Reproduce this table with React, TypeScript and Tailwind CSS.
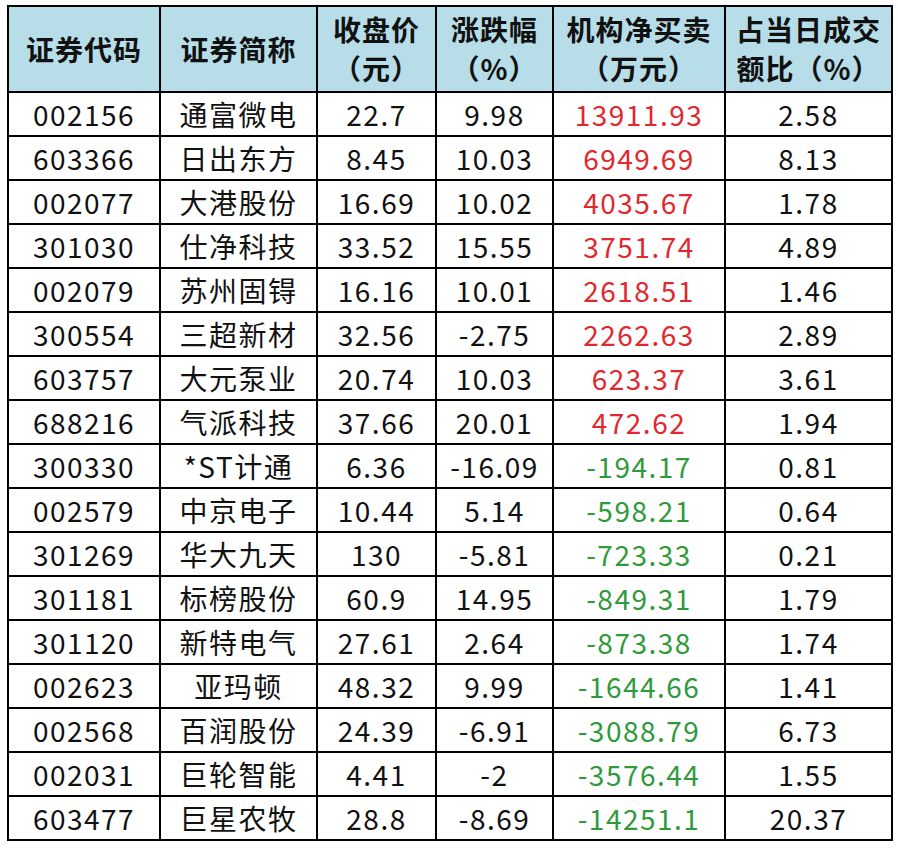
import React from "react";

interface Row {
  code: string;
  name: string;
  close: string;
  change: string;
  net: string;
  ratio: string;
}

const rows: Row[] = [
  { code: "002156", name: "通富微电", close: "22.7", change: "9.98", net: "13911.93", ratio: "2.58" },
  { code: "603366", name: "日出东方", close: "8.45", change: "10.03", net: "6949.69", ratio: "8.13" },
  { code: "002077", name: "大港股份", close: "16.69", change: "10.02", net: "4035.67", ratio: "1.78" },
  { code: "301030", name: "仕净科技", close: "33.52", change: "15.55", net: "3751.74", ratio: "4.89" },
  { code: "002079", name: "苏州固锝", close: "16.16", change: "10.01", net: "2618.51", ratio: "1.46" },
  { code: "300554", name: "三超新材", close: "32.56", change: "-2.75", net: "2262.63", ratio: "2.89" },
  { code: "603757", name: "大元泵业", close: "20.74", change: "10.03", net: "623.37", ratio: "3.61" },
  { code: "688216", name: "气派科技", close: "37.66", change: "20.01", net: "472.62", ratio: "1.94" },
  { code: "300330", name: "*ST计通", close: "6.36", change: "-16.09", net: "-194.17", ratio: "0.81" },
  { code: "002579", name: "中京电子", close: "10.44", change: "5.14", net: "-598.21", ratio: "0.64" },
  { code: "301269", name: "华大九天", close: "130", change: "-5.81", net: "-723.33", ratio: "0.21" },
  { code: "301181", name: "标榜股份", close: "60.9", change: "14.95", net: "-849.31", ratio: "1.79" },
  { code: "301120", name: "新特电气", close: "27.61", change: "2.64", net: "-873.38", ratio: "1.74" },
  { code: "002623", name: "亚玛顿", close: "48.32", change: "9.99", net: "-1644.66", ratio: "1.41" },
  { code: "002568", name: "百润股份", close: "24.39", change: "-6.91", net: "-3088.79", ratio: "6.73" },
  { code: "002031", name: "巨轮智能", close: "4.41", change: "-2", net: "-3576.44", ratio: "1.55" },
  { code: "603477", name: "巨星农牧", close: "28.8", change: "-8.69", net: "-14251.1", ratio: "20.37" },
];

// header cells: light blue fill, bold, two lines where needed
const th = "border-2 border-black bg-[#b7dde8] font-bold text-[28px] leading-[39px] tracking-[1px] text-[#111] text-center align-middle p-0 whitespace-nowrap";
const td = "border-2 border-black text-center align-middle h-[44px] p-0 leading-none tracking-[1.5px] whitespace-nowrap";

const App = () => {
  return (
    <div className="w-[898px] h-[848px] bg-white overflow-hidden pt-[5px] pl-[7px] font-['Noto_Sans_CJK_SC',sans-serif]">
      <table className="table-fixed border-collapse w-[885px] text-[28px] text-[#111]">
        <colgroup>
          <col className="w-[152px]" />
          <col className="w-[157px]" />
          <col className="w-[119px]" />
          <col className="w-[117px]" />
          <col className="w-[172px]" />
          <col className="w-[167px]" />
        </colgroup>
        <thead>
          <tr className="h-[86px]">
            <th className={th}>证券代码</th>
            <th className={th}>证券简称</th>
            <th className={th}>
              收盘价
              <br />
              （元）
            </th>
            <th className={th}>
              涨跌幅
              <br />
              （%）
            </th>
            <th className={th}>
              机构净买卖
              <br />
              （万元）
            </th>
            <th className={th}>
              占当日成交
              <br />
              额比（%）
            </th>
          </tr>
        </thead>
        <tbody>
          {rows.map((r) => (
            <tr key={r.code}>
              <td className={td}>{r.code}</td>
              <td className={td}>{r.name}</td>
              <td className={td}>{r.close}</td>
              <td className={td}>{r.change}</td>
              <td className={`${td} ${r.net.startsWith("-") ? "text-[#2f9a3c]" : "text-[#e0282e]"}`}>{r.net}</td>
              <td className={td}>{r.ratio}</td>
            </tr>
          ))}
        </tbody>
      </table>
    </div>
  );
};

export default App;
